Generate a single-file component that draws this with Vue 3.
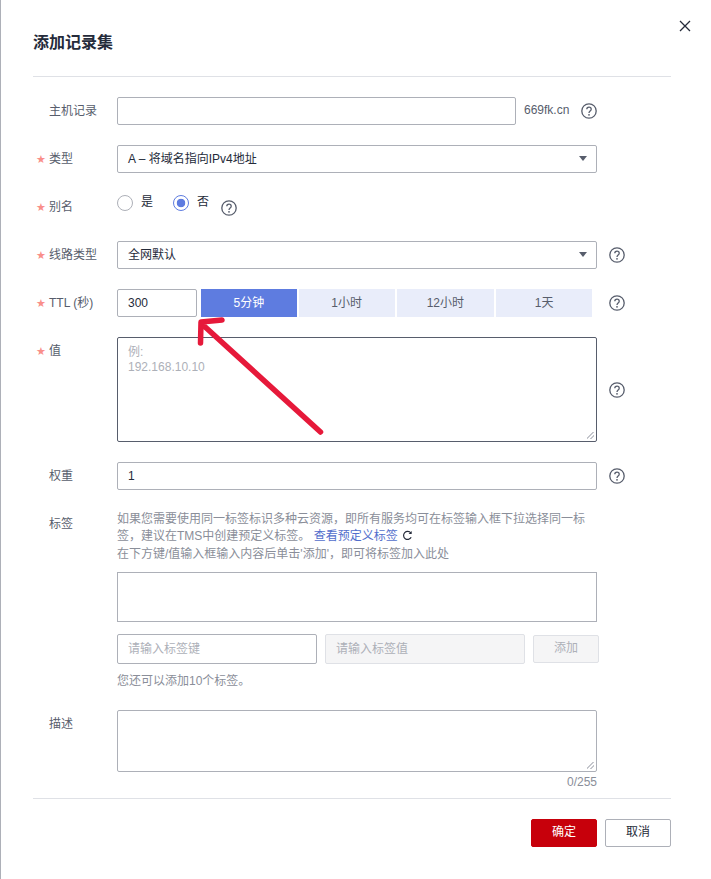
<script setup>
import { ref } from 'vue'
const tabs = ['5分钟', '1小时', '12小时', '1天']
const tip = ref('例:\n192.168.10.10')
</script>

<template>
  <div class="page">
    <svg class="defs" width="0" height="0" aria-hidden="true">
      <symbol id="help" viewBox="0 0 16 16">
        <circle cx="8" cy="8" r="7.2" fill="none" stroke="#575d6c" stroke-width="1.3" />
        <path d="M5.8 6.3c0-1.3 1-2.2 2.2-2.2s2.2.9 2.2 2.1c0 1.9-2.2 1.8-2.2 3.7" fill="none" stroke="#575d6c" stroke-width="1.3" />
        <circle cx="8" cy="11.8" r=".9" fill="#575d6c" />
      </symbol>
    </svg>

    <svg class="close" viewBox="0 0 12 12" aria-label="关闭">
      <path d="M1 1l10 10M11 1L1 11" stroke="#252b3a" stroke-width="1.3" fill="none" />
    </svg>

    <header class="head"><h1>添加记录集</h1></header>

    <form class="form">
      <div class="row">
        <label class="label">主机记录</label>
        <input class="field host" />
        <span class="suffix">669fk.cn</span>
        <svg class="help near"><use href="#help" /></svg>
      </div>

      <div class="row">
        <label class="label req">类型</label>
        <div class="field select wide"><span>A – 将域名指向IPv4地址</span><i class="caret"></i></div>
      </div>

      <div class="row">
        <label class="label req">别名</label>
        <div class="radios">
          <span class="radio"><i class="dot"></i>是</span>
          <span class="radio on"><i class="dot"></i>否</span>
          <svg class="help low"><use href="#help" /></svg>
        </div>
      </div>

      <div class="row">
        <label class="label req">线路类型</label>
        <div class="field select wide"><span>全网默认</span><i class="caret"></i></div>
        <svg class="help"><use href="#help" /></svg>
      </div>

      <div class="row">
        <label class="label req">TTL (秒)</label>
        <input class="field ttl" value="300" />
        <div class="tabs">
          <span v-for="(t, i) in tabs" :key="t" class="tab" :class="{ active: i === 0 }">{{ t }}</span>
        </div>
        <svg class="help tabs-help"><use href="#help" /></svg>
      </div>

      <div class="row tall">
        <label class="label req value-label">值</label>
        <textarea class="field area dark wide" :placeholder="tip"></textarea>
        <svg class="help"><use href="#help" /></svg>
      </div>

      <div class="row">
        <label class="label">权重</label>
        <input class="field wide" value="1" />
        <svg class="help"><use href="#help" /></svg>
      </div>

      <div class="row block">
        <label class="label">标签</label>
        <div class="tagbody">
          <p class="desc">如果您需要使用同一标签标识多种云资源，即所有服务均可在标签输入框下拉选择同一标</p>
          <p class="desc">签，建议在TMS中创建预定义标签。 <a class="link">查看预定义标签</a>
            <svg class="refresh" viewBox="0 0 12 12"><path d="M9.6 3.2A4.4 4.4 0 1 0 10 8" fill="none" stroke="#252b3a" stroke-width="1.3" /><path d="M10.6 1v3.4H7.2z" fill="#252b3a" /></svg>
          </p>
          <p class="desc third">在下方键/值输入框输入内容后单击'添加'，即可将标签加入此处</p>
          <div class="tagbox"></div>
          <div class="taginputs">
            <input class="field tagkey" placeholder="请输入标签键" />
            <input class="field tagkey off" placeholder="请输入标签值" disabled />
            <button type="button" class="addbtn" disabled>添加</button>
          </div>
          <p class="hint">您还可以添加10个标签。</p>
        </div>
      </div>

      <div class="row block descrow">
        <label class="label">描述</label>
        <div class="descbody">
          <textarea class="field area short wide"></textarea>
          <div class="count">0/255</div>
        </div>
      </div>
    </form>

    <footer class="foot">
      <button type="button" class="btn primary">确定</button>
      <button type="button" class="btn">取消</button>
    </footer>

    <svg class="arrow" width="711" height="879" viewBox="0 0 711 879" aria-hidden="true">
      <path d="M320.500 432L203 325M222 320L201 322L200.500 343" fill="none" stroke="#e6193a" stroke-width="5.500" stroke-linecap="round" stroke-linejoin="round" />
    </svg>
  </div>
</template>

<style>
html, body { margin: 0; background: #fff; }
</style>

<style scoped>
.page {
  position: relative;
  box-sizing: border-box;
  width: 711px;
  height: 879px;
  padding: 0 40px 0 32px;
  border-left: 1px solid #adb0b8;
  background: #fff;
  overflow: hidden;
  font: 12px/1.3 "Liberation Sans", "Noto Sans CJK SC", sans-serif;
  color: #252b3a;
}
.defs { position: absolute; }
.close { position: absolute; left: 678px; top: 20px; width: 12px; height: 12px; }
.head { height: 76px; border-bottom: 1px solid #dfe1e6; box-sizing: content-box; }
h1 { margin: 0; padding-top: 33px; font-size: 16px; line-height: 20px; font-weight: 700; color: #252b3a; }
.form { padding-top: 20px; height: 722px; box-sizing: border-box; border-bottom: 1px solid #dfe1e6; }
.row { display: flex; align-items: center; height: 28px; margin-bottom: 20px; }
.row.tall { height: 105px; }
.row.block { align-items: flex-start; height: auto; }
.label { position: relative; flex: none; width: 84px; padding-left: 16px; box-sizing: border-box; color: #575d6c; line-height: 28px; }
.req::before { content: "★"; position: absolute; left: 3px; top: 1px; color: #f98f8a; font-size: 11px; font-family: "DejaVu Sans", sans-serif; }
.value-label { align-self: flex-start; }
.field {
  box-sizing: border-box; height: 28px; border: 1px solid #adb0b8; border-radius: 2px; padding: 0 10px;
  font: inherit; color: #252b3a; background: #fff; outline: none; margin: 0;
}
.field::placeholder { color: #adb0b8; opacity: 1; }
.host { width: 399px; }
.wide { width: 480px; flex: none; }
.suffix { margin-left: 8px; color: #575d6c; width: 49px; flex: none; }
.help { width: 16px; height: 16px; flex: none; margin-left: 12px; }
.help.near { margin-left: 8px; }
.select { display: flex; align-items: center; justify-content: space-between; padding: 1px 9px 0 10px; }
.caret { width: 0; height: 0; border-left: 4px solid transparent; border-right: 4px solid transparent; border-top: 5px solid #575d6c; margin-top: -2px; }
.radios { display: flex; align-items: center; height: 28px; margin-top: -8px; }
.radio { display: flex; align-items: center; width: 56px; color: #252b3a; }
.radio:nth-child(2) { width: 48px; }
.dot { box-sizing: border-box; width: 16px; height: 16px; border: 1px solid #adb0b8; border-radius: 50%; margin-right: 8px; background: #fff; }
.on .dot { border-color: #5e7ce0; background: radial-gradient(circle, #5e7ce0 0 4px, #fff 4.6px); }
.help.low { margin: 10px 0 0 0; }
.ttl { width: 80px; flex: none; }
.tabs { display: flex; margin-left: 4px; width: 391px; gap: 2px; height: 28px; }
.tab { flex: 96 0 0; display: flex; align-items: center; justify-content: center; padding-top: 1px; box-sizing: border-box; background: #e9edfa; color: #575d6c; }
.tab:nth-child(3) { flex-basis: 2px; }
.tab.active { background: #5e7ce0; color: #fff; }
.tabs-help { margin-left: 17px; }
.area { display: block; padding: 7px 10px; line-height: 15px; resize: vertical; }
.area::-webkit-resizer {
  background: linear-gradient(135deg, transparent 0 40%, #c4c6cc 40% 55%, transparent 55% 68%, #c4c6cc 68% 83%, transparent 83%) no-repeat right 2px bottom 2px / 7px 7px;
}
.area.dark { height: 105px; border-color: #575d6c; }
.area.short { height: 62px; }
.tagbody { width: 482px; padding-top: 1px; }
.desc { margin: 0; line-height: 17px; color: #8a8e99; white-space: nowrap; }
.link { color: #526ecc; }
.refresh { width: 11px; height: 11px; margin-left: 4px; vertical-align: -1px; }
.third { margin-top: 1px; }
.tagbox { box-sizing: border-box; width: 480px; height: 50px; margin-top: 9px; border: 1px solid #adb0b8; }
.taginputs { display: flex; align-items: center; gap: 8px; margin-top: 12px; }
.tagkey { width: 200px; height: 30px; flex: none; }
.off { background: #f5f5f6; border-color: #dfe1e6; }
.addbtn { box-sizing: border-box; flex: none; width: 66px; height: 28px; border: 1px solid #dfe1e6; border-radius: 2px; background: #f5f5f6; color: #adb0b8; font: inherit; padding: 0; }
.hint { margin: 9px 0 0; color: #8a8e99; line-height: 16px; }
.descbody { width: 480px; }
.descrow { margin-top: 21px; margin-bottom: 0; }
.count { text-align: right; color: #8a8e99; line-height: 16px; margin-top: 2px; }
.foot { display: flex; justify-content: flex-end; gap: 8px; padding-top: 20px; }
.btn { box-sizing: border-box; width: 66px; height: 28px; padding: 0; border: 1px solid #adb0b8; border-radius: 2px; background: #fff; color: #252b3a; font: inherit; }
.primary { background: #c7000b; border-color: #c7000b; color: #fff; }
.arrow { position: absolute; left: -1px; top: 0; pointer-events: none; }
</style>
